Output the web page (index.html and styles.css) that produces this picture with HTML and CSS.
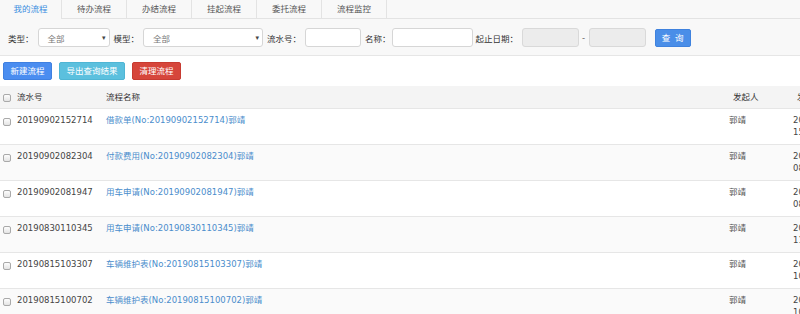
FILE: index.html
```html
<!DOCTYPE html>
<html lang="zh-CN">
<head>
<meta charset="utf-8">
<title>我的流程</title>
<link rel="stylesheet" href="styles.css">
</head>
<body>
<div class="top">
  <ul class="tabs">
    <li class="tab active">我的流程</li>
    <li class="tab">待办流程</li>
    <li class="tab">办结流程</li>
    <li class="tab">挂起流程</li>
    <li class="tab">委托流程</li>
    <li class="tab">流程监控</li>
  </ul>
  <form class="filters">
    <label class="lbl">类型：</label>
    <div class="select sel-type"><span>全部</span><i class="arrow">▾</i></div>
    <label class="lbl">模型：</label>
    <div class="select sel-model"><span>全部</span><i class="arrow">▾</i></div>
    <label class="lbl">流水号：</label>
    <div class="input in-no"></div>
    <label class="lbl lbl-name">名称：</label>
    <div class="input in-name"></div>
    <label class="lbl">起止日期：</label>
    <div class="input in-date disabled"></div>
    <span class="dash">-</span>
    <div class="input in-date disabled"></div>
    <button type="button" class="btn btn-query">查 询</button>
  </form>
</div>
<div class="toolbar">
  <button type="button" class="btn btn-new">新建流程</button>
  <button type="button" class="btn btn-export">导出查询结果</button>
  <button type="button" class="btn btn-clear">清理流程</button>
</div>
<table class="grid">
  <colgroup>
    <col class="c-check"><col class="c-no"><col class="c-name"><col class="c-user"><col class="c-time">
  </colgroup>
  <thead>
    <tr><th><span class="cb"></span></th><th>流水号</th><th>流程名称</th><th class="th-user">发起人</th><th class="th-time">发起时间</th></tr>
  </thead>
  <tbody>
    <tr><td><span class="cb"></span></td><td>20190902152714</td><td><a class="link">借款单(No:20190902152714)郭靖</a></td><td>郭靖</td><td>2019-09-02 15:27:14</td></tr>
    <tr><td><span class="cb"></span></td><td>20190902082304</td><td><a class="link">付款费用(No:20190902082304)郭靖</a></td><td>郭靖</td><td>2019-09-02 08:23:04</td></tr>
    <tr><td><span class="cb"></span></td><td>20190902081947</td><td><a class="link">用车申请(No:20190902081947)郭靖</a></td><td>郭靖</td><td>2019-09-02 08:19:47</td></tr>
    <tr><td><span class="cb"></span></td><td>20190830110345</td><td><a class="link">用车申请(No:20190830110345)郭靖</a></td><td>郭靖</td><td>2019-08-30 11:03:45</td></tr>
    <tr><td><span class="cb"></span></td><td>20190815103307</td><td><a class="link">车辆维护表(No:20190815103307)郭靖</a></td><td>郭靖</td><td>2019-08-15 10:33:07</td></tr>
    <tr><td><span class="cb"></span></td><td>20190815100702</td><td><a class="link">车辆维护表(No:20190815100702)郭靖</a></td><td>郭靖</td><td>2019-08-15 10:07:02</td></tr>
  </tbody>
</table>
</body>
</html>
```
FILE: styles.css
```css
html, body {
  margin: 0;
  padding: 0;
  background: #fff;
  overflow: hidden;
}
body {
  width: 800px;
  height: 314px;
  font-family: "DejaVu Sans", "Noto Sans CJK SC", sans-serif;
  font-size: 8.5px;
  color: #444;
}
.top {
  background: #f8f8f8;
  border-bottom: 1px solid #e6e6e6;
}
.tabs {
  list-style: none;
  margin: 0;
  padding: 0;
  display: flex;
  height: 18px;
  border-bottom: 1px solid #e3e3e3;
}
.tab {
  width: 64px;
  height: 18px;
  line-height: 18px;
  text-align: center;
  border-right: 1px solid #e3e3e3;
  color: #555;
}
.tab.active {
  width: 61px;
  color: #3a8de0;
  background: #f8f8f8;
  height: 19px;
}
.filters {
  display: flex;
  align-items: center;
  margin: 0;
  padding: 9px 0 8px 8px;
  height: 19px;
}
.lbl {
  color: #333;
  margin-right: 4px;
}
.lbl-name { margin-right: 1px; }
.select, .input {
  box-sizing: border-box;
  height: 19px;
  background: #fff;
  border: 1px solid #d6d6d6;
  border-radius: 3px;
  margin-right: 4px;
}
.select {
  display: flex;
  align-items: center;
  justify-content: space-between;
  padding: 0 3px 0 9px;
  color: #777;
}
.arrow {
  font-style: normal;
  font-size: 7px;
  color: #444;
}
.sel-type { width: 72px; }
.sel-model { width: 120px; }
.in-no { width: 56px; }
.in-name { width: 81px; margin-right: 3px; }
.in-date { width: 57px; margin-right: 0; }
.disabled {
  background: #ececec;
  border-color: #d9d9d9;
}
.dash {
  color: #666;
  margin: 0 4px 0 3px;
}
.btn {
  font-family: inherit;
  font-size: 8.5px;
  color: #fff;
  border: 1px solid transparent;
  border-radius: 2px;
  height: 18px;
  padding: 0 7px;
  margin: 0;
  line-height: 16px;
  cursor: pointer;
}
.btn-query {
  margin-left: 9px;
  width: 36px;
  padding: 0;
  background: #4a8ee8;
  border-color: #3f82de;
  letter-spacing: 1px;
}
.toolbar {
  display: flex;
  gap: 7px;
  padding: 6px 0 6px 3px;
}
.btn-new {
  width: 49px;
  padding: 0;
  background: #4a8df0;
  border-color: #3f80e0;
}
.btn-export {
  width: 66px;
  padding: 0;
  background: #5bc0de;
  border-color: #4fb5d4;
}
.btn-clear {
  width: 49px;
  padding: 0;
  background: #d6463b;
  border-color: #c73b31;
}
.grid {
  table-layout: fixed;
  border-collapse: collapse;
  width: 850px;
}
.c-check { width: 14px; }
.c-no { width: 89px; }
.c-name { width: 624px; }
.c-user { width: 63px; }
.c-time { width: 60px; }
.grid th {
  height: 22px;
  padding: 0 0 0 3px;
  background: #f4f4f4;
  font-weight: normal;
  color: #333;
  text-align: left;
  vertical-align: middle;
  line-height: 12px;
  white-space: nowrap;
  overflow: hidden;
}
.grid th.th-user { padding-left: 6px; }
.grid th.th-time { padding-left: 7px; }
.grid td {
  box-sizing: border-box;
  height: 36px;
  padding: 5px 0 5px 3px;
  line-height: 12px;
  vertical-align: top;
  border-top: 1px solid #e6e6e6;
  white-space: nowrap;
}
.grid td:last-child {
  white-space: normal;
}
.grid tbody tr:nth-child(even) td {
  background: #fafafa;
}
.grid td:nth-child(4) { color: #555; padding-left: 2px; }
.link {
  color: #4a8dcc;
  text-decoration: none;
}
.cb {
  display: inline-block;
  box-sizing: border-box;
  width: 8px;
  height: 8px;
  border: 1px solid #a9a9a9;
  border-radius: 2px;
  background: linear-gradient(#fdfdfd, #e4e4e4);
  vertical-align: middle;
}
.grid td .cb {
  margin-top: 2px;
}
```
